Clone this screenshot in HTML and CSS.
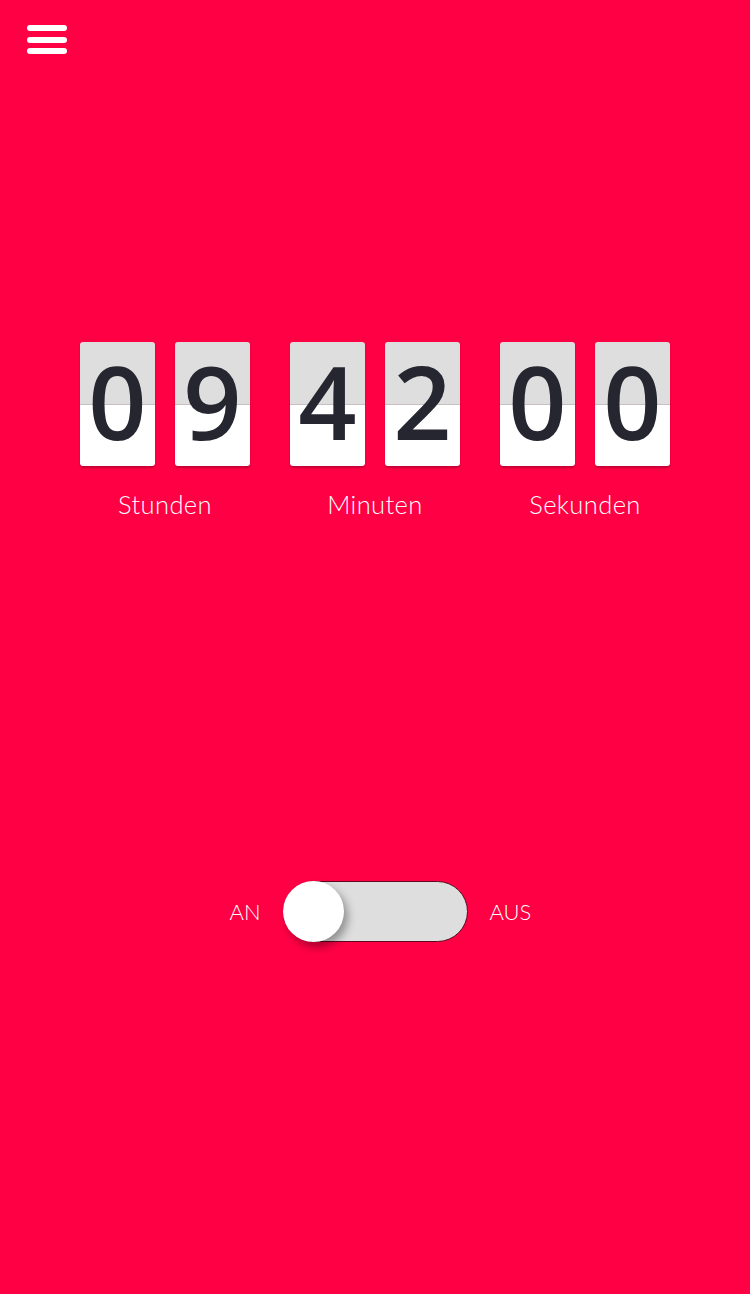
FILE: index.html
```html
<!DOCTYPE html>
<html lang="de">
<head>
<meta charset="utf-8">
<title>Timer</title>
<link rel="stylesheet" href="styles.css">
</head>
<body>
<div class="page">
  <button class="menu" aria-label="Menü">
    <span class="bar"></span>
    <span class="bar"></span>
    <span class="bar"></span>
  </button>

  <div class="clock">
    <div class="group">
      <div class="digits">
        <div class="card"><span>0</span></div>
        <div class="card"><span>9</span></div>
      </div>
      <div class="label">Stunden</div>
    </div>
    <div class="group">
      <div class="digits">
        <div class="card"><span>4</span></div>
        <div class="card"><span>2</span></div>
      </div>
      <div class="label">Minuten</div>
    </div>
    <div class="group">
      <div class="digits">
        <div class="card"><span>0</span></div>
        <div class="card"><span>0</span></div>
      </div>
      <div class="label">Sekunden</div>
    </div>
  </div>

  <div class="switch-row">
    <span class="switch-label on">AN</span>
    <div class="switch"><div class="knob"></div></div>
    <span class="switch-label off">AUS</span>
  </div>
</div>
</body>
</html>
```

FILE: styles.css
```css
html, body {
  margin: 0;
  padding: 0;
  background: #ff0044;
}

.page {
  min-height: 1294px;
  background: #ff0044;
  display: flex;
  flex-direction: column;
  font-family: Lato, "Open Sans", "Liberation Sans", sans-serif;
  color: #fff;
}

.menu {
  align-self: flex-start;
  margin: 25px 0 0 27px;
  padding: 0;
  border: 0;
  background: none;
  display: flex;
  flex-direction: column;
  gap: 5.5px;
}

.bar {
  display: block;
  width: 40px;
  height: 6px;
  border-radius: 3px;
  background: #fff;
}

.clock {
  margin-top: 288px;
  display: flex;
  justify-content: center;
  gap: 40px;
}

.group {
  display: flex;
  flex-direction: column;
  align-items: center;
}

.digits {
  display: flex;
  gap: 20px;
}

.card {
  width: 75px;
  height: 124px;
  border-radius: 3px;
  background: linear-gradient(#dedede 0, #dedede 62px, #c8bfc3 62px, #c8bfc3 63px, #ffffff 63px);
  box-shadow: 0 2px 2px rgba(90, 0, 25, 0.35);
  display: flex;
  align-items: center;
  justify-content: center;
}

.card span {
  font-family: "Open Sans", Lato, "Liberation Sans", sans-serif;
  font-weight: 600;
  font-size: 102px;
  line-height: 100px;
  color: #262630;
  margin-top: -7px;
}

.label {
  margin-top: 23px;
  font-size: 25.5px;
  font-weight: 300;
  letter-spacing: 0.4px;
  line-height: 1.2;
}

.switch-row {
  margin-top: 361px;
  display: grid;
  grid-template-columns: 1fr auto 1fr;
  align-items: center;
  column-gap: 22px;
}

.switch-label {
  font-size: 22px;
  font-weight: 300;
}

.switch-label.on {
  justify-self: end;
}

.switch-label.off {
  justify-self: start;
}

.switch {
  width: 183px;
  height: 59px;
  border: 1.5px solid #5c0a1f;
  border-radius: 32px;
  background: #dedede;
  display: flex;
  align-items: center;
}

.knob {
  width: 61px;
  height: 61px;
  margin-left: -0.5px;
  border-radius: 50%;
  background: #fff;
  box-shadow: 4px 5px 8px rgba(0, 0, 0, 0.35);
}
```
